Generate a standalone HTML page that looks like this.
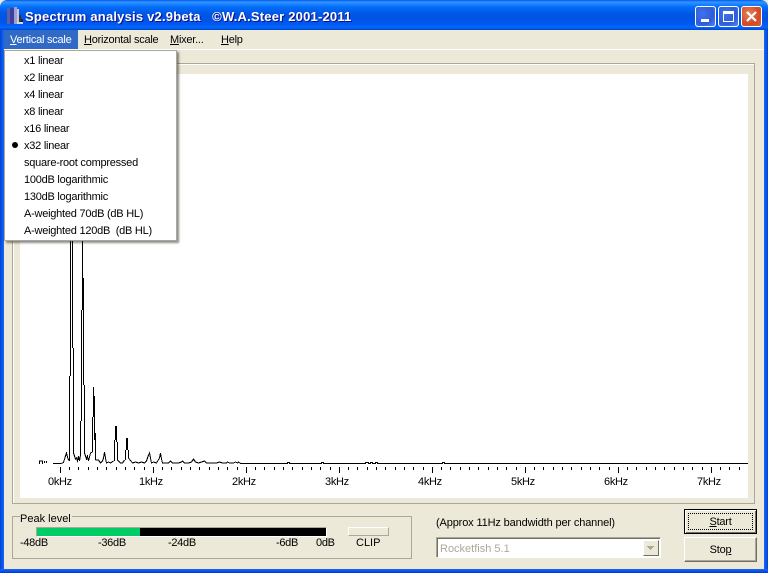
<!DOCTYPE html>
<html><head><meta charset="utf-8"><style>
html,body{margin:0;padding:0;width:768px;height:573px;overflow:hidden;background:#ECE9D8}
*{box-sizing:border-box}
body{font-family:"Liberation Sans",sans-serif;font-size:11px;color:#000;position:relative}
.a{position:absolute;white-space:nowrap}
.t{position:absolute;white-space:nowrap;line-height:13px;height:13px}
.k{letter-spacing:-.24px}
.d{letter-spacing:-.3px}
.cap{position:absolute;top:6px;width:21px;height:21px;border:1px solid #fff;border-radius:3px}
.m{position:absolute;left:19px;line-height:13px;white-space:nowrap;letter-spacing:-.24px}
</style></head><body>
<!-- title bar -->
<div class="a" style="left:0;top:0;width:768px;height:30px;border-radius:7px 7px 0 0;background:linear-gradient(180deg,#0058EE 0,#3593FF 2px,#288EFF 3px,#127DFF 5px,#036FFC 7px,#0262EE 10px,#0057E5 14px,#0054E3 17px,#0055EB 22px,#005BF5 25px,#026AFE 27px,#0062EF 28px,#0043CF 30px)"></div>
<!-- borders -->
<div class="a" style="left:0;top:30px;width:4px;height:543px;background:linear-gradient(90deg,#0831D9,#0855DD 25%,#0855EA 50%,#166AEE)"></div>
<div class="a" style="left:764px;top:30px;width:4px;height:543px;background:linear-gradient(90deg,#166AEE,#0855EA 50%,#0855DD 75%,#0831D9)"></div>
<div class="a" style="left:0;top:569px;width:768px;height:4px;background:linear-gradient(180deg,#166AEE,#0855EA 50%,#0831D9)"></div>
<!-- app icon -->
<svg class="a" style="left:5px;top:6px" width="19" height="20" shape-rendering="crispEdges">
<rect x="2" y="2" width="3" height="16" fill="#5a5fa8"/><rect x="5" y="2" width="4" height="16" fill="#3b3f9e"/><rect x="9" y="1" width="3" height="17" fill="#9aa0d8"/><rect x="12" y="3" width="2" height="15" fill="#c8c8d8"/><rect x="14" y="9" width="2" height="9" fill="#303048"/><rect x="16" y="13" width="2" height="5" fill="#202030"/><rect x="12" y="16" width="6" height="2" fill="#d8d8e0"/>
</svg>
<div class="a" style="left:25px;top:8px;font-weight:bold;font-size:13px;line-height:17px;color:#fff;text-shadow:1px 1px 0 #0F1089;letter-spacing:.2px">Spectrum analysis v2.9beta &nbsp; ©W.A.Steer 2001-2011</div>
<!-- caption buttons -->
<div class="cap" style="left:695px;background:radial-gradient(circle at 35% 35%,#3F72EE,#2F5CD8 60%,#5C86EE)"><div class="a" style="left:5px;top:12px;width:8px;height:3px;background:#fff"></div></div>
<div class="cap" style="left:718px;background:radial-gradient(circle at 35% 35%,#3F72EE,#2F5CD8 60%,#5C86EE)"><div class="a" style="left:4px;top:4px;width:11px;height:11px;border:1px solid #fff;border-top-width:3px"></div></div>
<div class="cap" style="left:741px;background:radial-gradient(circle at 35% 35%,#E2825F,#D24A24 60%,#D8603A)"><svg class="a" style="left:3px;top:3px" width="13" height="13"><path d="M2 2L11 11M11 2L2 11" stroke="#fff" stroke-width="2.2" fill="none"/></svg></div>
<!-- menu bar -->
<div class="a" style="left:4px;top:49px;width:760px;height:1px;background:#fff"></div>
<div class="a" style="left:4px;top:30px;width:74px;height:19px;background:#316AC5"></div>
<div class="t k" style="left:10px;top:34px;color:#fff"><u>V</u>ertical scale</div>
<div class="t k" style="left:84px;top:34px"><u>H</u>orizontal scale</div>
<div class="t k" style="left:170px;top:34px"><u>M</u>ixer...</div>
<div class="t k" style="left:221px;top:34px"><u>H</u>elp</div>
<!-- plot group -->
<div class="a" style="left:12px;top:63px;width:743px;height:441px;border:1px solid #ACA899;box-shadow:inset 1px 1px 0 #fff"></div>
<div class="a" style="left:20px;top:74px;width:728px;height:424px;background:#fff"></div>
<svg class="a" style="left:0;top:0" width="768" height="500" shape-rendering="crispEdges">
<g fill="none" stroke="#000" stroke-width="1">
<path d="M39.5 464V461H42.5V464M44.5 461V463M46.5 461V463"/>
<path d="M53 463.5H61L63.5 462.5L65.5 456L66.5 453L68 459L69.5 461"/>
<path d="M69.5 461V376M70.5 376V241M72.5 241V348M73.5 348V453"/>
<path d="M73.5 453L75.5 459L76.5 458L77.5 461L78.5 456L79.5 461L80.5 455"/>
<path d="M80.5 455V421M81.5 421V310M82.5 310V241M83.5 278V385M84.5 385V453"/>
<path d="M84.5 453L86.5 459L87.5 456L88.5 461L90.5 453L92.5 452"/>
<path d="M92.5 452V417M93.5 417V387M94.5 396V440M95.5 433V460"/>
<path d="M95.5 460L98.5 460L100.5 463L102.5 461L103.5 458L104.5 452L105.5 458L106.5 463L108.5 462L110.5 463L113.5 461"/>
<path d="M114.5 461V440M115.5 440V426M116.5 426V442M117.5 442V460"/>
<path d="M117.5 460L120.5 463L122.5 463L124.5 460"/>
<path d="M125.5 460V450M126.5 450V438M127.5 438V450M128.5 450V458"/>
<path d="M128.5 458L132.5 463L135.5 462L138.5 463L141.5 462L144.5 463L146.5 461L148.5 455L149.5 453L150.5 458L151.5 463L153.5 462L156.5 463L159.5 458L160.5 453L161.5 459L162.5 463L165.5 463L168.5 463L170.5 461L172.5 463L175.5 463L178.5 463L181.5 462L182.5 461L184.5 463L188.5 463L191.5 462L193.5 459L195.5 462L198.5 463L201.5 462L204.5 461L206.5 463L209.5 463L213.5 463L216.5 463L219.5 462L222.5 463L226.5 463L227.5 462L229.5 463L233.5 463L235.5 462L237.5 463L238.5 462L240.5 463.5H287.5V462.5H289.5V463.5H321.5V462.5H323.5V463.5H365.5V462.5H368.5V463.5H370.5V462.5H372.5V463.5H375.5V462.5H377.5V463.5H442.5V462.5H444.5V463.5H748"/>
</g>
<g stroke="#000" stroke-width="1">
<path d="M60.5 467V473M153.5 467V473M246.5 467V473M339.5 467V473M432.5 467V473M525.5 467V473M618.5 467V473M711.5 467V473"/>
<path d="M69.5 467V470M78.5 467V470M88.5 467V470M97.5 467V470M106.5 467V470M116.5 467V470M125.5 467V470M134.5 467V470M144.5 467V470M162.5 467V470M171.5 467V470M181.5 467V470M190.5 467V470M199.5 467V470M209.5 467V470M218.5 467V470M227.5 467V470M237.5 467V470M255.5 467V470M264.5 467V470M274.5 467V470M283.5 467V470M292.5 467V470M302.5 467V470M311.5 467V470M320.5 467V470M330.5 467V470M348.5 467V470M357.5 467V470M367.5 467V470M376.5 467V470M385.5 467V470M395.5 467V470M404.5 467V470M413.5 467V470M423.5 467V470M441.5 467V470M450.5 467V470M460.5 467V470M469.5 467V470M478.5 467V470M488.5 467V470M497.5 467V470M506.5 467V470M516.5 467V470M534.5 467V470M543.5 467V470M553.5 467V470M562.5 467V470M571.5 467V470M581.5 467V470M590.5 467V470M599.5 467V470M609.5 467V470M627.5 467V470M636.5 467V470M646.5 467V470M655.5 467V470M664.5 467V470M674.5 467V470M683.5 467V470M692.5 467V470M702.5 467V470M720.5 467V470M729.5 467V470M739.5 467V470"/>
</g>
</svg>
<div class="t d" style="left:48px;top:476px">0kHz</div>
<div class="t d" style="left:139px;top:476px">1kHz</div>
<div class="t d" style="left:232px;top:476px">2kHz</div>
<div class="t d" style="left:325px;top:476px">3kHz</div>
<div class="t d" style="left:418px;top:476px">4kHz</div>
<div class="t d" style="left:511px;top:476px">5kHz</div>
<div class="t d" style="left:604px;top:476px">6kHz</div>
<div class="t d" style="left:697px;top:476px">7kHz</div>
<!-- dropdown menu -->
<div class="a" style="left:4px;top:50px;width:173px;height:191px;background:#fff;border:1px solid #ACA899;box-shadow:2px 2px 2px rgba(0,0,0,.45)">
<div class="m" style="top:4px">x1 linear</div>
<div class="m" style="top:21px">x2 linear</div>
<div class="m" style="top:38px">x4 linear</div>
<div class="m" style="top:55px">x8 linear</div>
<div class="m" style="top:72px">x16 linear</div>
<div class="m" style="top:89px">x32 linear</div>
<div class="a" style="left:7px;top:91px;width:6px;height:6px;border-radius:50%;background:#000"></div>
<div class="m" style="top:106px">square-root compressed</div>
<div class="m" style="top:123px">100dB logarithmic</div>
<div class="m" style="top:140px">130dB logarithmic</div>
<div class="m" style="top:157px">A-weighted 70dB (dB HL)</div>
<div class="m" style="top:174px">A-weighted 120dB &nbsp;(dB HL)</div>
</div>
<!-- Peak level -->
<div class="a" style="left:12px;top:516px;width:400px;height:43px;border:1px solid #ACA899"></div>
<div class="t" style="left:20px;top:513px;background:#ECE9D8;padding-right:1px">Peak level</div>
<div class="a" style="left:36px;top:527px;width:291px;height:10px;border:1px solid;border-color:#ACA899 #fff #fff #ACA899;background:#000"><div class="a" style="left:0;top:0;width:103px;height:8px;background:#00CC66"></div></div>
<div class="t d" style="left:20px;top:537px">-48dB</div>
<div class="t d" style="left:98px;top:537px">-36dB</div>
<div class="t d" style="left:168px;top:537px">-24dB</div>
<div class="t d" style="left:276px;top:537px">-6dB</div>
<div class="t d" style="left:316px;top:537px">0dB</div>
<div class="a" style="left:348px;top:527px;width:41px;height:9px;border:1px solid;border-color:#fff #ACA899 #ACA899 #fff"></div>
<div class="t" style="left:356px;top:537px">CLIP</div>
<!-- right controls -->
<div class="t" style="left:436px;top:517px;letter-spacing:-.14px">(Approx 11Hz bandwidth per channel)</div>
<div class="a" style="left:436px;top:537px;width:225px;height:21px;border:1px solid;border-color:#ACA899 #fff #fff #ACA899;background:#fff;box-shadow:inset 1px 1px 0 #716F64">
<div class="t" style="left:3px;top:5px;color:#ACA899">Rocketfish 5.1</div>
<div class="a" style="right:1px;top:2px;width:16px;height:16px;background:#ECE9D8;border:1px solid;border-color:#fff #716F64 #716F64 #fff"><svg class="a" style="left:2px;top:4px" width="10" height="6" shape-rendering="crispEdges"><path d="M1 1h7v1H1zM2 2h5v1H2zM3 3h3v1H3zM4 4h1v1H4z" fill="#ACA899"/></svg></div>
</div>
<div class="a" style="left:684px;top:509px;width:73px;height:25px;border:1px solid #000;box-shadow:inset 1px 1px 0 #fff,inset -1px -1px 0 #716F64">
<div class="a" style="left:3px;top:3px;width:65px;height:17px;border:1px dotted #000"></div>
<div class="t k" style="left:0;width:71px;top:6px;text-align:center"><u>S</u>tart</div>
</div>
<div class="a" style="left:684px;top:537px;width:73px;height:25px;border:1px solid;border-color:#fff #716F64 #716F64 #fff;box-shadow:inset -1px -1px 0 #ACA899">
<div class="t k" style="left:0;width:71px;top:6px;text-align:center">Sto<u>p</u></div>
</div>
</body></html>
